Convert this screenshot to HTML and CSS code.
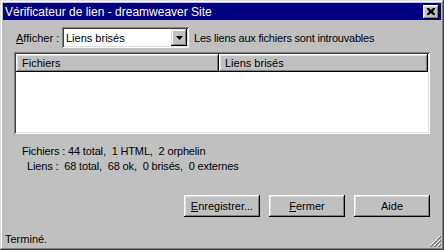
FILE: index.html
```html
<!DOCTYPE html>
<html lang="fr">

<head>
    <meta charset="UTF-8">
    <meta name="viewport" content="width=device-width, initial-scale=1.0">
    <title>Vérificateur de lien</title>
    <link rel="stylesheet" href="styles.css">
</head>

<body>
    <div class="window">
        <div class="titlebar">
            <span class="title">Vérificateur de lien - dreamweaver Site</span>
            <span class="close-btn">
                <svg width="8" height="7" viewBox="0 0 8 7">
                    <path d="M0 0h2l2 2 2-2h2v1l-2 2.5 2 2.5v1h-2l-2-2-2 2h-2v-1l2-2.5-2-2.5z" fill="#000"/>
                </svg>
            </span>
        </div>

        <div class="content">
            <div class="show-row">
                <label class="show-label"><u>A</u>fficher :</label>
                <div class="combo">
                    <span class="combo-value">Liens brisés</span>
                    <span class="combo-btn">
                        <svg width="7" height="4" viewBox="0 0 7 4">
                            <path d="M0 0h7l-3.5 4z" fill="#000"/>
                        </svg>
                    </span>
                </div>
                <span class="show-note">Les liens aux fichiers sont introuvables</span>
            </div>

            <div class="listview">
                <div class="list-header">
                    <div class="col col-files">Fichiers</div>
                    <div class="col col-links">Liens brisés</div>
                </div>
                <div class="list-body"></div>
            </div>

            <div class="stats">
                <div class="stat-files">Fichiers : 44 total,  1 HTML,  2 orphelin</div>
                <div class="stat-links">Liens :  68 total,  68 ok,  0 brisés,  0 externes</div>
            </div>

            <div class="buttons">
                <button class="btn"><u>E</u>nregistrer...</button>
                <button class="btn"><u>F</u>ermer</button>
                <button class="btn">Aide</button>
            </div>
        </div>

        <div class="statusbar">
            <span class="status-text">Terminé.</span>
            <svg class="grip" width="12" height="12" viewBox="0 0 12 12">
                <path d="M11 1L1 11M11 5L5 11M11 9L9 11" stroke="#fff" stroke-width="1"/>
                <path d="M12 1L1 12M12 2L2 12M12 5L5 12M12 6L6 12M12 9L9 12M12 10L10 12" stroke="#808080" stroke-width="1"/>
            </svg>
        </div>
    </div>
</body>

</html>
```

FILE: styles.css
```css
* {
    box-sizing: border-box;
}

body {
    margin: 0;
    font-family: "Liberation Sans", Arial, sans-serif;
    font-size: 11px;
    color: #000;
    background-color: #c0c0c0;
}

u {
    text-decoration: underline;
    text-underline-offset: 1px;
}

.window {
    width: 444px;
    height: 250px;
    padding: 3px;
    display: flex;
    flex-direction: column;
    background-color: #c0c0c0;
    box-shadow: inset -1px -1px #404040, inset 1px 1px #dfdfdf,
        inset -2px -2px #808080, inset 2px 2px #fff;
}

.titlebar {
    height: 17px;
    display: flex;
    align-items: center;
    justify-content: space-between;
    padding: 0 2px 0 2px;
    background-color: #000080;
    color: #fff;
    font-size: 12px;
}

.close-btn {
    width: 16px;
    height: 14px;
    display: flex;
    align-items: center;
    justify-content: center;
    background-color: #c0c0c0;
    box-shadow: inset -1px -1px #000, inset 1px 1px #fff,
        inset -2px -2px #808080, inset 2px 2px #dfdfdf;
}

.content {
    padding: 7px 11px 0 11px;
}

.show-row {
    display: flex;
    align-items: center;
    height: 21px;
    white-space: nowrap;
}

.show-label {
    width: 48px;
    padding-left: 2px;
}

.combo {
    width: 127px;
    height: 21px;
    display: flex;
    align-items: center;
    justify-content: space-between;
    padding: 2px;
    background-color: #fff;
    box-shadow: inset 1px 1px #808080, inset -1px -1px #fff,
        inset 2px 2px #404040, inset -2px -2px #dfdfdf;
}

.combo-value {
    padding-left: 2px;
}

.combo-btn {
    width: 16px;
    height: 17px;
    display: flex;
    align-items: center;
    justify-content: center;
    background-color: #c0c0c0;
    box-shadow: inset -1px -1px #000, inset 1px 1px #dfdfdf,
        inset -2px -2px #808080, inset 2px 2px #fff;
}

.show-note {
    padding-left: 5px;
    letter-spacing: -0.2px;
}

.listview {
    margin-top: 4px;
    height: 82px;
    padding: 2px;
    display: flex;
    flex-direction: column;
    background-color: #fff;
    box-shadow: inset 1px 1px #808080, inset -1px -1px #fff,
        inset 2px 2px #404040, inset -2px -2px #dfdfdf;
}

.list-header {
    display: flex;
    height: 18px;
}

.col {
    height: 18px;
    padding: 3px 6px 0 6px;
    background-color: #c0c0c0;
    box-shadow: inset -1px -1px #000, inset 1px 1px #fff,
        inset -2px -2px #808080, inset 2px 2px #dfdfdf;
}

.col-files {
    width: 203px;
}

.col-links {
    flex: 1;
}

.list-body {
    flex: 1;
}

.stats {
    margin-top: 10px;
    line-height: 15px;
}

.stat-files,
.stat-links {
    white-space: pre;
    letter-spacing: -0.15px;
}

.stat-files {
    padding-left: 8px;
}

.stat-links {
    padding-left: 13px;
}

.buttons {
    margin-top: 21px;
    display: flex;
    justify-content: flex-end;
    gap: 9px;
}

.btn {
    width: 76px;
    height: 22px;
    padding: 0;
    border: none;
    background-color: #c0c0c0;
    font-family: "Liberation Sans", Arial, sans-serif;
    font-size: 11px;
    color: #000;
    box-shadow: inset -1px -1px #000, inset 1px 1px #fff,
        inset -2px -2px #808080, inset 2px 2px #dfdfdf;
}

.statusbar {
    margin-top: auto;
    height: 16px;
    display: flex;
    align-items: flex-end;
    justify-content: space-between;
    padding-left: 2px;
}

.status-text {
    line-height: 15px;
}

.grip {
    display: block;
}
```
